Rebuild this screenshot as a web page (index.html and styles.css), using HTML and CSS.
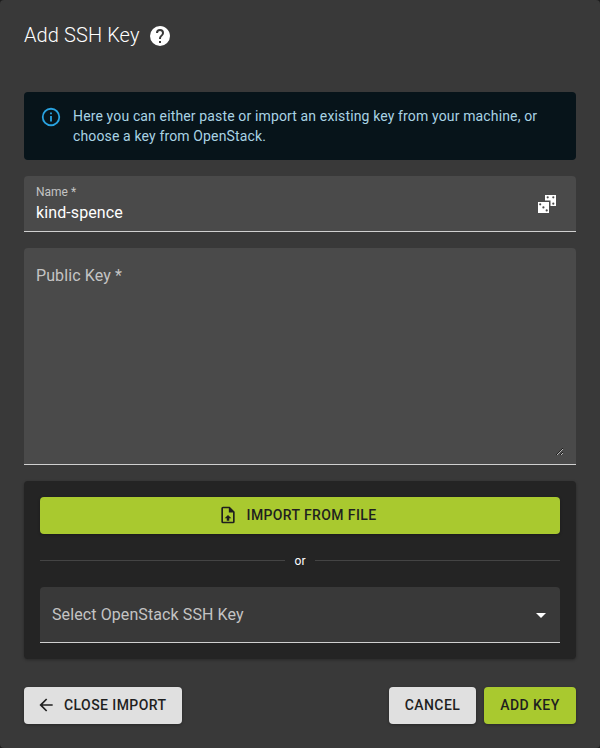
FILE: index.html
```html
<!DOCTYPE html>
<html lang="en">
<head>
  <meta charset="UTF-8">
  <title>Add SSH Key</title>
  <link rel="stylesheet" href="styles.css">
</head>
<body>
  <div class="dialog">
    <div class="dialog-title">
      <span>Add SSH Key</span>
      <svg class="help-icon" viewBox="0 0 24 24"><path d="M15.07,11.25L14.17,12.17C13.45,12.89 13,13.5 13,15H11V14.5C11,13.39 11.45,12.39 12.17,11.67L13.41,10.41C13.78,10.05 14,9.55 14,9C14,7.89 13.1,7 12,7A2,2 0 0,0 10,9H8A4,4 0 0,1 12,5A4,4 0 0,1 16,9C16,9.88 15.64,10.67 15.07,11.25M13,19H11V17H13M12,2A10,10 0 0,0 2,12A10,10 0 0,0 12,22A10,10 0 0,0 22,12C22,6.47 17.5,2 12,2Z"/></svg>
    </div>

    <div class="alert">
      <svg class="alert-icon" viewBox="0 0 24 24"><path d="M11,9H13V7H11M12,20C7.59,20 4,16.41 4,12C4,7.59 7.59,4 12,4C16.41,4 20,7.59 20,12C20,16.41 16.41,20 12,20M12,2A10,10 0 0,0 2,12A10,10 0 0,0 12,22A10,10 0 0,0 22,12A10,10 0 0,0 12,2M11,17H13V11H11V17Z"/></svg>
      <p>Here you can either paste or import an existing key from your machine, or choose a key from OpenStack.</p>
    </div>

    <div class="field name-field">
      <div class="name-text">
        <label for="key-name">Name *</label>
        <input id="key-name" type="text" value="kind-spence">
      </div>
      <svg class="dice-icon" viewBox="0 0 24 24">
        <path class="die" d="M3,10H14V21H3Z"/>
        <path class="die" d="M10,3H21V14H15.5V8.5H10Z"/>
        <circle class="pip" cx="5.2" cy="12.3" r="1.1"/>
        <circle class="pip" cx="8.4" cy="15.4" r="1.1"/>
        <circle class="pip" cx="11.7" cy="18.4" r="1.1"/>
        <circle class="pip" cx="12.7" cy="5.3" r="1.1"/>
        <circle class="pip" cx="18.3" cy="5.3" r="1.1"/>
        <circle class="pip" cx="18.3" cy="11.7" r="1.1"/>
      </svg>
    </div>

    <div class="field key-field">
      <textarea placeholder="Public Key *"></textarea>
    </div>

    <div class="import-panel">
      <button class="btn btn-green btn-wide">
        <svg class="btn-icon" viewBox="0 0 24 24"><path d="M14,2H6A2,2 0 0,0 4,4V20A2,2 0 0,0 6,22H18A2,2 0 0,0 20,20V8L14,2M18,20H6V4H13V9H18V20M12,12L16,16H13.5V19H10.5V16H8L12,12Z"/></svg>
        Import from file
      </button>
      <div class="or-divider"><span>or</span></div>
      <div class="select">
        <span>Select OpenStack SSH Key</span>
        <svg class="caret" viewBox="0 0 24 24"><path d="M7,10L12,15L17,10H7Z"/></svg>
      </div>
    </div>

    <div class="actions">
      <button class="btn btn-light btn-back">
        <svg class="btn-icon" viewBox="0 0 24 24"><path d="M20,11V13H8L13.5,18.5L12.08,19.92L4.16,12L12.08,4.08L13.5,5.5L8,11H20Z"/></svg>
        Close import
      </button>
      <div class="actions-right">
        <button class="btn btn-light btn-cancel">Cancel</button>
        <button class="btn btn-green btn-add">Add key</button>
      </div>
    </div>
  </div>
</body>
</html>
```

FILE: styles.css
```css
html, body {
  margin: 0;
  padding: 0;
  background: #1c1c1c;
}

body {
  font-family: Roboto, sans-serif;
  overflow: hidden;
}

.dialog {
  width: 600px;
  height: 748px;
  box-sizing: border-box;
  padding: 0 24px;
  background: #393939;
  border-radius: 4px;
  color: #fff;
}

.dialog-title {
  height: 92px;
  padding-top: 24px;
  box-sizing: border-box;
  display: flex;
  align-items: flex-start;
  gap: 8px;
  font-size: 20px;
  font-weight: 300;
  line-height: 22px;
  letter-spacing: 0.1px;
}

.help-icon {
  width: 24px;
  height: 24px;
  fill: #fff;
}

.alert {
  height: 68px;
  box-sizing: border-box;
  display: flex;
  gap: 11px;
  padding: 14px 16px;
  background: #07141a;
  border-radius: 4px;
  color: #a9d3e4;
  margin-bottom: 16px;
}

.alert p {
  margin: 0;
  font-size: 14px;
  line-height: 20px;
  letter-spacing: 0.14px;
}

.alert-icon {
  width: 22px;
  height: 22px;
  fill: #29a3e0;
  flex: none;
}

.field {
  background: #4a4a4a;
  border-radius: 4px 4px 0 0;
  border-bottom: 1px solid #d0d0d0;
  box-sizing: border-box;
  margin-bottom: 16px;
}

.name-field {
  height: 56px;
  display: flex;
  align-items: center;
  padding: 0 17px 0 12px;
}

.name-text {
  flex: 1;
  display: flex;
  flex-direction: column;
  padding-top: 2px;
}

.name-text label {
  font-size: 12px;
  line-height: 14px;
  color: #c4c4c4;
}

.name-text input {
  background: none;
  border: 0;
  outline: 0;
  padding: 0;
  margin-top: 2px;
  font: 400 16px/24px Roboto, sans-serif;
  letter-spacing: 0.1px;
  color: #fff;
}

.dice-icon {
  width: 24px;
  height: 24px;
  flex: none;
}

.die {
  fill: #fff;
}

.pip {
  fill: #4a4a4a;
}

.key-field {
  height: 217px;
  padding: 0 12px 8px;
}

.key-field textarea {
  display: block;
  width: 100%;
  height: 100%;
  box-sizing: border-box;
  padding: 16px 0 0;
  background: none;
  border: 0;
  outline: 0;
  color: #fff;
  color-scheme: dark;
  font: 400 16px/24px Roboto, sans-serif;
  letter-spacing: 0.1px;
}

.key-field textarea::placeholder {
  color: #c4c4c4;
  opacity: 1;
}

.import-panel {
  height: 178px;
  box-sizing: border-box;
  padding: 16px;
  background: #242424;
  border-radius: 4px;
  box-shadow: 0 1px 3px rgba(0, 0, 0, 0.3);
  margin-bottom: 28px;
}

.btn {
  height: 37px;
  padding: 0 16px 1px;
  border: 0;
  border-radius: 4px;
  display: inline-flex;
  align-items: center;
  justify-content: center;
  font: 500 14px Roboto, sans-serif;
  letter-spacing: 0.42px;
  text-transform: uppercase;
  color: #1f1f1f;
  box-shadow: 0 1px 3px rgba(0, 0, 0, 0.3);
}

.btn-green {
  background: #a9c92f;
}

.btn-light {
  background: #e0e0e0;
}

.btn-wide {
  width: 100%;
  padding-right: 22px;
  letter-spacing: 0.38px;
}

.btn-wide .btn-icon {
  margin-right: 9px;
}

.btn-back {
  padding-left: 12px;
}

.btn-cancel {
  width: 87px;
  padding: 0 0 1px;
}

.btn-add {
  width: 92px;
  padding: 0 0 1px;
}

.btn-icon {
  width: 20px;
  height: 20px;
  margin-right: 8px;
  fill: #1f1f1f;
}

.or-divider {
  height: 53px;
  display: flex;
  align-items: center;
  gap: 10px;
  font-size: 12px;
  color: #fff;
}

.or-divider::before,
.or-divider::after {
  content: '';
  flex: 1;
  height: 1px;
  background: #444;
}

.select {
  height: 56px;
  box-sizing: border-box;
  display: flex;
  align-items: center;
  justify-content: space-between;
  padding: 0 7px 0 12px;
  background: #393939;
  border-radius: 4px 4px 0 0;
  border-bottom: 1px solid #d0d0d0;
  font-size: 16px;
  letter-spacing: 0.1px;
  color: #c4c4c4;
}

.caret {
  width: 24px;
  height: 24px;
  fill: #fff;
}

.actions {
  display: flex;
  justify-content: space-between;
}

.actions-right {
  display: flex;
  gap: 8px;
}
```
